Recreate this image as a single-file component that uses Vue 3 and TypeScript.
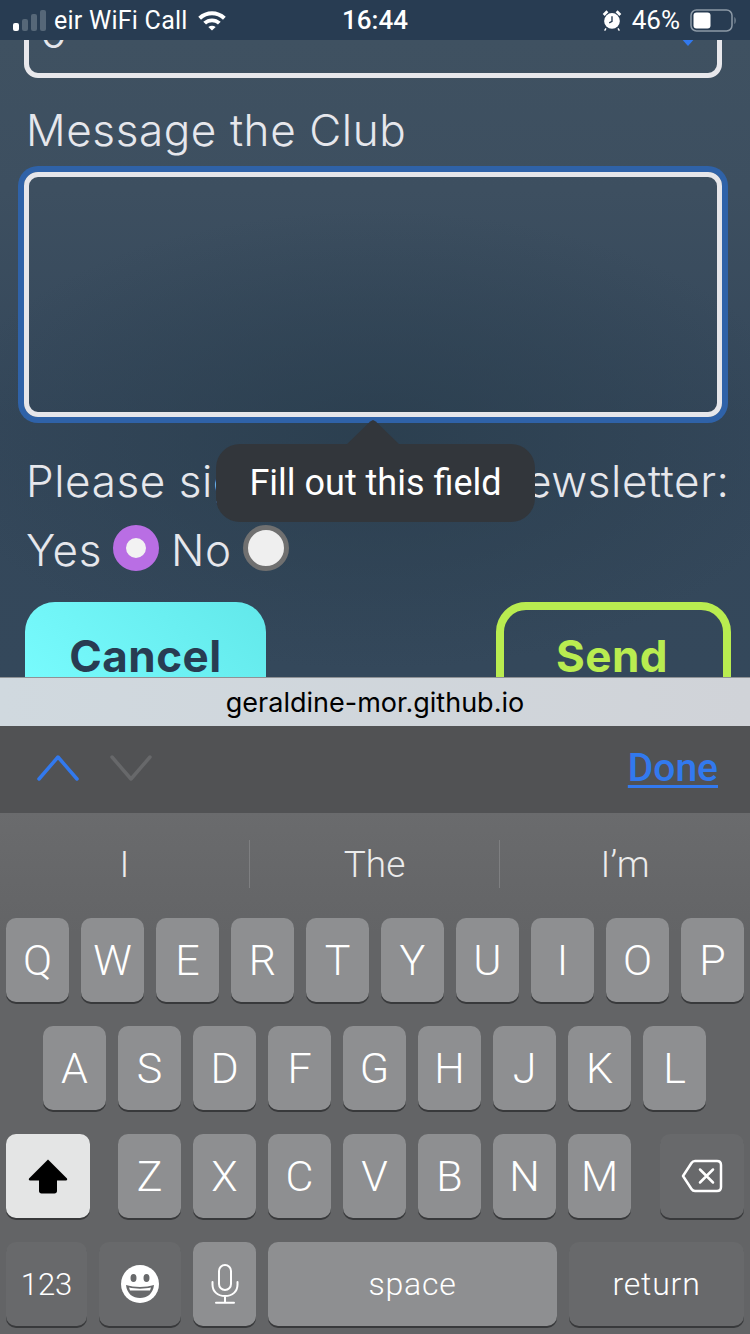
<script setup lang="ts">
const rowOne: string[] = ['Q', 'W', 'E', 'R', 'T', 'Y', 'U', 'I', 'O', 'P']
const rowTwo: string[] = ['A', 'S', 'D', 'F', 'G', 'H', 'J', 'K', 'L']
const rowThree: string[] = ['Z', 'X', 'C', 'V', 'B', 'N', 'M']
const suggestions: string[] = ['I', 'The', 'I’m']
</script>

<template>
  <div class="phone">
    <div class="status-bar">
      <div class="status-left">
        <div class="signal">
          <i class="on h1"></i><i class="h2"></i><i class="h3"></i><i class="h4"></i>
        </div>
        <span class="carrier">eir WiFi Call</span>
        <svg class="wifi" width="30" height="22" viewBox="0 0 32 24">
          <path d="M1 8.5C9.5 0.5 22.5 0.5 31 8.5L28 11.6C21 5.2 11 5.2 4 11.6Z" fill="#fff" />
          <path d="M6.5 14C12 9 20 9 25.500 14L22.500 17C18.500 13.600 13.500 13.600 9.500 17Z" fill="#fff" />
          <path d="M12 19.500C14.500 17.700 17.500 17.700 20 19.500L16 23.500Z" fill="#fff" />
        </svg>
      </div>
      <span class="clock">16:44</span>
      <div class="status-right">
        <svg width="20" height="24" viewBox="0 0 20 26">
          <circle cx="10" cy="14" r="8.500" fill="#fff" />
          <path d="M10 9V14.500L7 16" fill="none" stroke="#283c52" stroke-width="1.500" />
          <path d="M1 7.500L5 3.500M19 7.500L15 3.500" stroke="#fff" stroke-width="3" />
          <path d="M3.500 22L2 24.500M16.500 22L18 24.500" stroke="#fff" stroke-width="1.500" />
        </svg>
        <span class="percent">46%</span>
        <svg width="47" height="23" viewBox="0 0 47 23">
          <rect x="1" y="1" width="41" height="21" rx="5.500" fill="none" stroke="#8c99a6" stroke-width="1.500" />
          <rect x="3.500" y="3.500" width="17" height="16" rx="3" fill="#fff" />
          <path d="M44.500 8C46 9 46 14 44.500 15Z" fill="#8c99a6" />
        </svg>
      </div>
    </div>

    <div class="page">
      <div class="select-box">
        <span class="select-value">0</span>
        <span class="select-arrow"></span>
      </div>

      <label class="field-label">Message the Club</label>
      <div class="message-wrap">
        <textarea class="message"></textarea>
        <div class="tooltip">
          <span class="tooltip-arrow"></span>
          Fill out this field
        </div>
      </div>

      <p class="news-label">Please sign up for our newsletter:</p>
      <div class="radio-row">
        <span>Yes</span>
        <input class="radio" type="radio" name="news" checked />
        <span class="no-label">No</span>
        <input class="radio" type="radio" name="news" />
      </div>

      <div class="actions">
        <button class="cancel">Cancel</button>
        <button class="send">Send</button>
      </div>
    </div>

    <div class="url-bar">geraldine-mor.github.io</div>

    <div class="accessory">
      <div class="chevrons">
        <svg width="42" height="26" viewBox="0 0 42 26">
          <path d="M2 24L21 2L40 24" fill="none" stroke="#3279ee" stroke-width="3.500" stroke-linecap="round" stroke-linejoin="round" />
        </svg>
        <svg width="42" height="26" viewBox="0 0 42 26">
          <path d="M2 2L21 24L40 2" fill="none" stroke="#67686a" stroke-width="3.500" stroke-linecap="round" stroke-linejoin="round" />
        </svg>
      </div>
      <span class="done">Done</span>
    </div>

    <div class="keyboard">
      <div class="suggestions">
        <span v-for="word in suggestions" :key="word" class="suggestion">{{ word }}</span>
      </div>

      <div class="rows">
        <div class="row">
          <span v-for="k in rowOne" :key="k" class="key">{{ k }}</span>
        </div>
        <div class="row row-two">
          <span v-for="k in rowTwo" :key="k" class="key">{{ k }}</span>
        </div>
        <div class="row row-three">
          <span class="key shift">
            <svg width="40" height="36" viewBox="0 0 40 36">
              <path d="M20 1.500L39 20.500C39.500 21.500 39 22.500 38 22.500H29V33C29 34.500 28 35.500 26.500 35.500H13.500C12 35.500 11 34.500 11 33V22.500H2C1 22.500 0.500 21.500 1 20.500Z" fill="#000" />
            </svg>
          </span>
          <div class="letters">
            <span v-for="k in rowThree" :key="k" class="key">{{ k }}</span>
          </div>
          <span class="key dark backspace">
            <svg width="42" height="34" viewBox="0 0 42 34">
              <path d="M14 2H36C38.500 2 40 3.500 40 6V28C40 30.500 38.500 32 36 32H14C12.500 32 11.500 31.500 10.500 30L2 17L10.500 4C11.500 2.500 12.500 2 14 2Z" fill="none" stroke="#fff" stroke-width="2.500" stroke-linejoin="round" />
              <path d="M19 10.500L32 23.500M32 10.500L19 23.500" stroke="#fff" stroke-width="2.500" stroke-linecap="round" />
            </svg>
          </span>
        </div>
        <div class="row bottom-row">
          <span class="key dark small num">123</span>
          <span class="key dark emoji">
            <svg width="38" height="38" viewBox="0 0 38 38">
              <circle cx="19" cy="19" r="19" fill="#fff" />
              <ellipse cx="12.500" cy="13" rx="3" ry="4" fill="#68696b" />
              <ellipse cx="25.500" cy="13" rx="3" ry="4" fill="#68696b" />
              <path d="M5 20C13 22.500 25 22.500 33 20C32 29 26 33 19 33C12 33 6 29 5 20Z" fill="#68696b" />
              <path d="M8 22.500C14 24 24 24 30 22.500L29 25.500H9Z" fill="#fff" />
            </svg>
          </span>
          <span class="key mic">
            <svg width="28" height="40" viewBox="0 0 28 40">
              <rect x="8" y="1" width="12" height="25" rx="6" fill="none" stroke="#fff" stroke-width="2" />
              <path d="M1.500 18V20.500C1.500 27.500 6.500 32 14 32C21.500 32 26.500 27.500 26.500 20.500V18M14 32V38.500M5 38.800H23" fill="none" stroke="#fff" stroke-width="2" stroke-linecap="round" />
            </svg>
          </span>
          <span class="key small space">space</span>
          <span class="key dark small return">return</span>
        </div>
      </div>
    </div>
  </div>
</template>

<style>
html,
body {
  margin: 0;
  background: #636466;
}
</style>

<style scoped>
.phone {
  width: 750px;
  height: 1334px;
  overflow: hidden;
  display: flex;
  flex-direction: column;
  font-family: Roboto, 'Liberation Sans', sans-serif;
  position: relative;
}

.status-bar {
  height: 40px;
  flex: none;
  background: #283c52;
  color: #fff;
  display: grid;
  grid-template-columns: 1fr auto 1fr;
  align-items: center;
  padding: 0 13px 0 13px;
  box-sizing: border-box;
  font-size: 25px;
  position: relative;
  z-index: 2;
}

.status-left {
  display: flex;
  align-items: center;
  gap: 8px;
}

.signal {
  display: flex;
  align-items: flex-end;
  gap: 3px;
  height: 21px;
}

.signal i {
  width: 6px;
  background: #566778;
  border-radius: 2px;
}

.signal .on {
  background: #fff;
}

.h1 {
  height: 8px;
}

.h2 {
  height: 12px;
}

.h3 {
  height: 17px;
}

.h4 {
  height: 21px;
}

.carrier {
  letter-spacing: 0.25px;
}

.wifi {
  margin-left: 1px;
}

.clock {
  font-size: 26px;
  font-weight: 500;
}

.status-right {
  display: flex;
  justify-content: flex-end;
  align-items: center;
  gap: 10px;
}

.percent {
  font-size: 26px;
}

.page {
  height: 637px;
  flex: none;
  overflow: hidden;
  box-sizing: border-box;
  padding: 0 24px 0 26px;
  background:
    radial-gradient(ellipse 440px 230px at 50% 400px, rgba(42, 62, 78, 0.85), rgba(42, 62, 78, 0)),
    linear-gradient(#3f5161 0, #3d4f60 150px, #34475a 380px, #34485b 637px);
  color: #e6e7ec;
  font-family: Inter, Roboto, sans-serif;
  font-weight: 300;
  font-size: 44px;
  letter-spacing: 0.6px;
  position: relative;
}

.select-box {
  width: 698px;
  height: 100px;
  margin: -62px 0 0 -2px;
  box-sizing: border-box;
  border: 5px solid #e8e8ec;
  border-radius: 14px;
  position: relative;
}

.select-value {
  position: absolute;
  left: 11px;
  top: 23px;
  font-size: 44px;
  line-height: 52px;
}

.select-arrow {
  position: absolute;
  right: 21px;
  top: 54px;
  width: 0;
  height: 0;
  border-left: 8px solid transparent;
  border-right: 8px solid transparent;
  border-top: 9px solid #3279ee;
}

.field-label {
  display: block;
  line-height: 52px;
  margin-top: 26px;
}

.message-wrap {
  position: relative;
  width: 698px;
  height: 245px;
  margin: 16px 0 0 -2px;
}

.message {
  display: block;
  width: 100%;
  height: 100%;
  box-sizing: border-box;
  background: transparent;
  border: 5px solid #e6e6ea;
  border-radius: 14px;
  box-shadow: 0 0 0 6px #2f62a8;
  resize: none;
  outline: none;
}

.tooltip {
  position: absolute;
  left: 192px;
  top: 272px;
  width: 319px;
  height: 78px;
  border-radius: 24px;
  background: #32363b;
  color: #fff;
  font-family: Roboto, sans-serif;
  font-size: 36px;
  font-weight: 400;
  letter-spacing: 0;
  line-height: 78px;
  text-align: center;
  z-index: 1;
}

.tooltip-arrow {
  position: absolute;
  left: 129px;
  top: -24px;
  width: 56px;
  height: 26px;
  background: #32363b;
  clip-path: polygon(0 100%, 45% 6%, 50% 0, 55% 6%, 100% 100%);
}

.news-label {
  margin: 38px 0 0;
  line-height: 52px;
  white-space: nowrap;
}

.radio-row {
  display: flex;
  align-items: center;
  height: 52px;
  margin-top: 17px;
  line-height: 52px;
}

.radio {
  appearance: none;
  -webkit-appearance: none;
  width: 46px;
  height: 46px;
  margin: -4px 0 0 11px;
  box-sizing: border-box;
  border-radius: 50%;
  border: 5px solid #707070;
  background: #efefef;
}

.radio:checked {
  border: 13px solid #b96ee4;
  background: #f2f2f2;
}

.no-label {
  margin-left: 12px;
}

.actions {
  display: flex;
  justify-content: space-between;
  margin: 26px -5px 0 -1px;
}

.actions button {
  height: 110px;
  box-sizing: border-box;
  border-radius: 30px;
  font-family: inherit;
  font-size: 44px;
  font-weight: 700;
  letter-spacing: 0.5px;
  padding: 0 0 2px;
}

.cancel {
  width: 241px;
  border: none;
  background: linear-gradient(225deg, #62e8ea, #7afdff);
  color: #283c52;
}

.send {
  width: 235px;
  border: 8px solid #b9ec50;
  background: transparent;
  color: #b9ec50;
  padding-right: 3px !important;
}

.url-bar {
  height: 49px;
  flex: none;
  box-sizing: border-box;
  border-top: 1px solid #8f9296;
  background: linear-gradient(90deg, #d0d9df, #d0d3d8);
  color: #000;
  font-family: Inter, Roboto, sans-serif;
  font-size: 27px;
  line-height: 50px;
  text-align: center;
  position: relative;
  z-index: 1;
}

.accessory {
  height: 87px;
  flex: none;
  background: #515254;
  display: flex;
  align-items: center;
  justify-content: space-between;
  padding: 0 32px 4px 37px;
  box-sizing: border-box;
}

.chevrons {
  display: flex;
  gap: 31px;
}

.done {
  color: #3279ee;
  font-size: 39px;
  font-weight: 500;
  text-decoration: underline;
  text-underline-offset: 4px;
  text-decoration-thickness: 3px;
}

.keyboard {
  flex: 1;
  background: linear-gradient(#6a6b6d, #636466 120px);
  color: #fff;
  font-weight: 300;
}

.suggestions {
  height: 105px;
  display: grid;
  grid-template-columns: 249px 250px 251px;
  box-sizing: border-box;
  padding-top: 27px;
}

.suggestion {
  height: 48px;
  line-height: 50px;
  text-align: center;
  font-size: 37px;
  color: #ececec;
}

.suggestion + .suggestion {
  border-left: 1px solid #7e7f81;
}

.rows {
  display: flex;
  flex-direction: column;
  gap: 24px;
  padding: 0 6px;
}

.row {
  display: flex;
  justify-content: center;
  gap: 12px;
}

.row-two {
  padding-right: 1px;
}

.row-three {
  justify-content: space-between;
  gap: 0;
}

.letters {
  display: flex;
  gap: 12px;
  margin-right: 1px;
}

.key {
  width: 63px;
  height: 84px;
  flex: none;
  box-sizing: border-box;
  border-radius: 10px;
  background: #8e8f91;
  box-shadow: 0 2px 0 #38393b;
  display: flex;
  align-items: center;
  justify-content: center;
  font-size: 43px;
}

.key.dark {
  background: #68696b;
}

.key.small {
  font-size: 31px;
}

.key.space,
.key.return {
  font-size: 32px;
  letter-spacing: 0.8px;
}

.shift {
  width: 84px;
  background: #e4e5e5;
}

.backspace {
  width: 84px;
}

.num {
  width: 81px;
}

.emoji {
  width: 82px;
}

.space {
  width: 289px;
}

.return {
  width: 175px;
}
</style>
